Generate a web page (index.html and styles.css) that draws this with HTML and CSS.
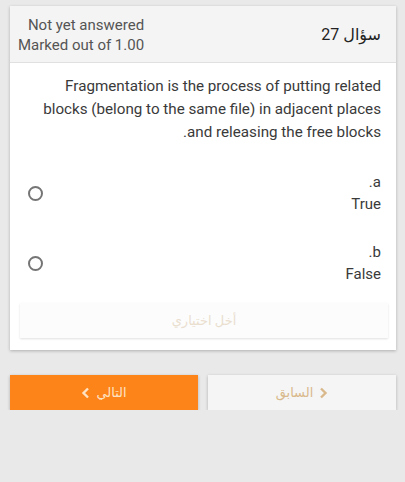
FILE: index.html
```html
<!DOCTYPE html>
<html lang="ar" dir="rtl">
<head>
    <meta charset="UTF-8">
    <meta name="viewport" content="width=device-width, initial-scale=1.0">
    <title>سؤال 27</title>
    <link rel="stylesheet" href="styles.css">
</head>
<body>
    <div class="card">
        <div class="card-head">
            <h3 class="qno">سؤال <span dir="ltr">27</span></h3>
            <div class="state">
                <div>Not yet answered</div>
                <div>Marked out of 1.00</div>
            </div>
        </div>

        <div class="card-body">
            <p class="qtext">Fragmentation is the process of putting related blocks (belong to the same file) in adjacent places and releasing the free blocks.</p>

            <label class="option">
                <span class="label-text">
                    <span>a.</span>
                    <span>True</span>
                </span>
                <span class="radio"></span>
            </label>
            <label class="option">
                <span class="label-text">
                    <span>b.</span>
                    <span>False</span>
                </span>
                <span class="radio"></span>
            </label>

            <div class="clear-choice">أخل اختياري</div>
        </div>
    </div>

    <div class="nav">
        <a href="#" class="btn btn-prev">
            <svg width="10" height="12" viewBox="0 0 10 12"><path d="M3 1.5 L7.5 6 L3 10.5" fill="none" stroke="currentColor" stroke-width="2.4"/></svg>
            السابق
        </a>
        <a href="#" class="btn btn-next">
            التالي
            <svg width="10" height="12" viewBox="0 0 10 12"><path d="M7 1.5 L2.5 6 L7 10.5" fill="none" stroke="currentColor" stroke-width="2.4"/></svg>
        </a>
    </div>
</body>
</html>
```

FILE: styles.css
```css
body {
    margin: 0;
    padding: 6px 9px 0 10px;
    background-color: #e9e9e9;
    font-family: Roboto, "DejaVu Sans", sans-serif;
    color: #333;
}
.card {
    background: white;
    box-shadow: 0 1px 3px rgba(0,0,0,0.25);
}
.card-head {
    display: flex;
    justify-content: space-between;
    align-items: center;
    height: 56px;
    padding: 0 15px 0 8px;
    background-color: #f4f4f4;
    border-bottom: 1px solid #e0e0e0;
}
.qno {
    margin: 0;
    font-size: 16px;
    font-weight: normal;
    color: #222;
}
.state {
    font-size: 15px;
    line-height: 20px;
    color: #555;
    padding-top: 1px;
}
.card-body {
    padding: 12px 8px 12px 10px;
}
.qtext {
    margin: 0 7px 14px 10px;
    font-size: 15.2px;
    line-height: 23px;
    color: #3a3a3a;
}
.option {
    display: flex;
    justify-content: space-between;
    align-items: center;
    height: 70px;
    margin-right: 7px;
    color: #3a3a3a;
}
.label-text {
    display: flex;
    flex-direction: column;
    font-size: 15px;
    line-height: 22px;
}
.radio {
    width: 11px;
    height: 11px;
    border: 2px solid #757575;
    border-radius: 50%;
    margin-left: 8px;
}
.clear-choice {
    margin-top: 5px;
    height: 35px;
    line-height: 35px;
    text-align: center;
    background-color: #fcfcfc;
    box-shadow: 0 1px 2px rgba(0,0,0,0.12);
    font-size: 13px;
    color: #eadfcf;
}
.nav {
    display: flex;
    gap: 10px;
    margin-top: 25px;
}
.btn {
    flex: 1;
    display: flex;
    align-items: center;
    justify-content: center;
    gap: 5px;
    height: 35px;
    text-decoration: none;
    font-size: 13px;
    box-shadow: 0 1px 3px rgba(0,0,0,0.25);
}
.btn-prev {
    background-color: #f5f5f5;
    color: #d9b98c;
}
.btn-next {
    background-color: #fd8419;
    color: #fde3c3;
}
```
